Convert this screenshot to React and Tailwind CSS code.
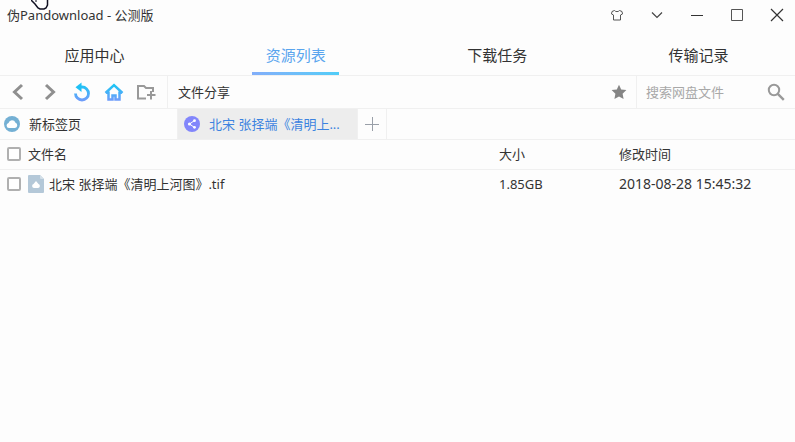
import React, { useState } from "react";

const SECTIONS = ["应用中心", "资源列表", "下载任务", "传输记录"];

const FILES = [
  {
    id: 1,
    name: "北宋 张择端《清明上河图》.tif",
    size: "1.85GB",
    time: "2018-08-28 15:45:32",
  },
];

export default function App() {
  const [section, setSection] = useState("资源列表");

  return (
    <div className="min-h-screen overflow-hidden bg-[#fdfdfd] font-['Noto_Sans','Noto_Sans_CJK_SC',sans-serif] text-[13px] leading-5 text-[#333333]">
      <TitleBar />
      <Sections active={section} onSelect={setSection} />
      <Toolbar />
      <PageTabs />
      <FileTable files={FILES} />
    </div>
  );
}

function TitleBar() {
  return (
    <header className="relative flex h-9 items-center justify-between pr-2.5 pb-1.5 pl-[7px]">
      <h1>伪Pandownload - 公测版</h1>
      <HandCursor />
      <div className="flex gap-6">
        <IconButton label="皮肤">
          <svg viewBox="0 0 16 16" className="size-4" fill="none" stroke="#555" strokeWidth="1">
            <path d="M5.500 3.500 3 4.500 2.500 7l2 1v5h7V8l2-1-.5-2.500-2.500-1C9.500 5 6.500 5 5.500 3.500Z" />
          </svg>
        </IconButton>
        <IconButton label="菜单">
          <svg viewBox="0 0 16 16" className="size-4" fill="none" stroke="#444" strokeWidth="1.200">
            <path d="m3 5.500 5 5 5-5" />
          </svg>
        </IconButton>
        <IconButton label="最小化">
          <svg viewBox="0 0 16 16" className="size-4" fill="none" stroke="#333" strokeWidth="1">
            <path d="M2 8.500h12" />
          </svg>
        </IconButton>
        <IconButton label="最大化">
          <svg viewBox="0 0 16 16" className="size-4" fill="none" stroke="#555" strokeWidth="1">
            <path d="M2.500 2.500h11v11h-11z" />
          </svg>
        </IconButton>
        <IconButton label="关闭">
          <svg viewBox="0 0 16 16" className="size-4" fill="none" stroke="#333" strokeWidth="1.200">
            <path d="m2 2 12 12M14 2 2 14" />
          </svg>
        </IconButton>
      </div>
    </header>
  );
}

function Sections({ active, onSelect }) {
  return (
    <nav className="flex h-10 justify-between border-b border-[#f0f0f0] pr-[53px] pl-[51px]">
      {SECTIONS.map((name) => (
        <button
          key={name}
          onClick={() => onSelect(name)}
          className={
            name === active
              ? "flex w-[87px] flex-col justify-between text-[15px] text-[#5aa5ee]"
              : "flex w-[87px] flex-col justify-between text-[15px]"
          }
        >
          <span className="w-full pt-[7px] text-center leading-6">{name}</span>
          {name === active && (
            <span className="h-[3px] w-full bg-linear-to-r from-[#82aefa] to-[#50cdf8]" />
          )}
        </button>
      ))}
    </nav>
  );
}

function Toolbar() {
  return (
    <div className="flex h-[33px] items-center border-b border-[#f0f0f0]">
      <div className="flex h-full w-[168px] items-center gap-3 border-r border-[#f0f0f0] pl-2">
        <IconButton label="后退">
          <svg viewBox="0 0 20 20" className="size-5" fill="none" stroke="#8f8f8f" strokeWidth="3">
            <path d="m14 3-7.500 7L14 17" />
          </svg>
        </IconButton>
        <IconButton label="前进">
          <svg viewBox="0 0 20 20" className="size-5" fill="none" stroke="#8f8f8f" strokeWidth="3">
            <path d="m6 3 7.500 7L6 17" />
          </svg>
        </IconButton>
        <IconButton label="刷新">
          <svg viewBox="0 0 20 20" className="size-5" fill="none">
            <Gradient id="reload" />
            <path d="M3.500 11.500a6.500 6.500 0 1 0 6.500-6.500H8" stroke="url(#reload)" strokeWidth="2.800" />
            <path d="M9.500.5v9.500L3.500 5.200Z" fill="#1fc0f5" />
          </svg>
        </IconButton>
        <IconButton label="主页">
          <svg viewBox="0 0 20 20" className="size-5" fill="none">
            <Gradient id="home" />
            <path
              d="M1.500 11 10 3.200 18.500 11M4.500 9.500v8h4v-4h3v4h4v-8"
              stroke="url(#home)"
              strokeWidth="2.500"
            />
          </svg>
        </IconButton>
        <IconButton label="新建文件夹">
          <svg viewBox="0 0 20 20" className="size-5" fill="none" stroke="#999" strokeWidth="2">
            <path d="M10 16.500H2V4h6l2 2h7v4M15 9v8.500M11 13h8.500" />
          </svg>
        </IconButton>
      </div>
      <div className="flex h-full min-w-0 flex-1 items-center justify-between border-r border-[#f0f0f0] pr-[9px] pl-2.5">
        <input aria-label="地址" defaultValue="文件分享" className="min-w-0 flex-1 outline-none" />
        <IconButton label="收藏">
          <svg viewBox="0 0 16 16" className="size-4" fill="#858585">
            <path d="m8 .8 2.200 4.700 5.200.6-3.800 3.600 1 5.200L8 12.400l-4.600 2.500 1-5.200L.6 6.100l5.200-.6Z" />
          </svg>
        </IconButton>
      </div>
      <div className="flex h-full w-[158px] items-center gap-2 pr-2.5 pl-[9px]">
        <input
          aria-label="搜索网盘文件"
          placeholder="搜索网盘文件"
          className="min-w-0 flex-1 outline-none placeholder:text-[#a8a8a8]"
        />
        <IconButton label="搜索">
          <svg viewBox="0 0 18 18" className="size-[18px]" fill="none" stroke="#999" strokeWidth="2">
            <circle cx="7" cy="7" r="5.200" />
            <path d="m10.800 10.800 6 6" strokeWidth="2.400" />
          </svg>
        </IconButton>
      </div>
    </div>
  );
}

function PageTabs() {
  return (
    <div className="flex h-[31px] border-b border-[#f0f0f0]">
      <button className="flex w-[178px] items-center gap-[9px] border-r border-[#f0f0f0] pl-1">
        <svg viewBox="0 0 16 16" className="size-4">
          <circle cx="8" cy="8" r="8" fill="#74b0d4" />
          <path d="M5 12a2.600 2.600 0 0 1-.5-5.100 3.700 3.700 0 0 1 7-.1A2.700 2.700 0 0 1 11 12Z" fill="#fff" />
        </svg>
        新标签页
      </button>
      <button className="flex w-[180px] items-center gap-[9px] border-r border-[#f0f0f0] bg-[#ededed] pr-4 pl-1.5 text-[#3c83e0]">
        <svg viewBox="0 0 16 16" className="size-4 shrink-0">
          <circle cx="8" cy="8" r="8" fill="#8286fb" />
          <path d="M10.500 4.500 5.500 8l5 3.500" fill="none" stroke="#fff" strokeWidth="1" />
          <circle cx="10.500" cy="4.700" r="1.400" fill="#fff" />
          <circle cx="5.500" cy="8" r="1.600" fill="#fff" />
          <circle cx="10.500" cy="11.300" r="1.400" fill="#fff" />
        </svg>
        <span className="truncate">北宋 张择端《清明上...</span>
      </button>
      <button aria-label="新建标签页" className="flex w-[29px] items-center justify-center border-r border-[#f0f0f0]">
        <svg viewBox="0 0 14 14" className="size-3.5" fill="none" stroke="#999fa8">
          <path d="M7.500 0v14M0 7.500h14" />
        </svg>
      </button>
    </div>
  );
}

function FileTable({ files }) {
  return (
    <table className="w-full table-fixed text-left">
      <thead>
        <tr className="h-[29px] border-b border-[#f0f0f0]">
          <th className="pl-[7px] font-normal">
            <div className="flex items-center gap-[7px]">
              <Checkbox label="全选" />
              文件名
            </div>
          </th>
          <th className="w-[120px] font-normal">大小</th>
          <th className="w-44 font-normal">修改时间</th>
        </tr>
      </thead>
      <tbody>
        {files.map((f) => (
          <tr key={f.id} className="h-[29px]">
            <td className="pl-[7px]">
              <div className="flex items-center gap-[7px]">
                <Checkbox label={f.name} />
                <div className="flex items-center gap-[5px]">
                  <FileIcon />
                  {f.name}
                </div>
              </div>
            </td>
            <td>{f.size}</td>
            <td className="text-sm">{f.time}</td>
          </tr>
        ))}
      </tbody>
    </table>
  );
}

function Checkbox({ label }) {
  return (
    <input
      type="checkbox"
      aria-label={label}
      className="size-3.5 appearance-none rounded-xs border-2 border-[#b0b0b0] bg-white checked:bg-[#5aa5ee]"
    />
  );
}

function IconButton({ label, children }) {
  return (
    <button aria-label={label} className="shrink-0">
      {children}
    </button>
  );
}

function Gradient({ id }) {
  return (
    <linearGradient id={id} x1="0" y1="2" x2="0" y2="18" gradientUnits="userSpaceOnUse">
      <stop stopColor="#18c8f5" />
      <stop offset="1" stopColor="#6e9dfa" />
    </linearGradient>
  );
}

function FileIcon() {
  return (
    <svg viewBox="0 0 16 18" className="h-[18px] w-4">
      <path d="M1 0h11l4 4v13a1 1 0 0 1-1 1H1a1 1 0 0 1-1-1V1a1 1 0 0 1 1-1Z" fill="#b4c8d8" />
      <path d="M12 0v3a1 1 0 0 0 1 1h3Z" fill="#d3dfe8" />
      <path d="M6 13a2 2 0 0 1-.5-3.900L8 6l2.500 3.100A2 2 0 0 1 10 13Z" fill="#fff" />
    </svg>
  );
}

function HandCursor() {
  return (
    <svg viewBox="0 0 18 10" className="absolute top-0 left-[31px] h-2.5 w-[18px]">
      <path
        d="M0 0 4 4l3 4 2 1h4l2-1 1.500-3V0"
        fill="#fff"
        stroke="#111122"
        strokeWidth="1.500"
      />
      <path d="M5 0v2" stroke="#111122" />
    </svg>
  );
}
